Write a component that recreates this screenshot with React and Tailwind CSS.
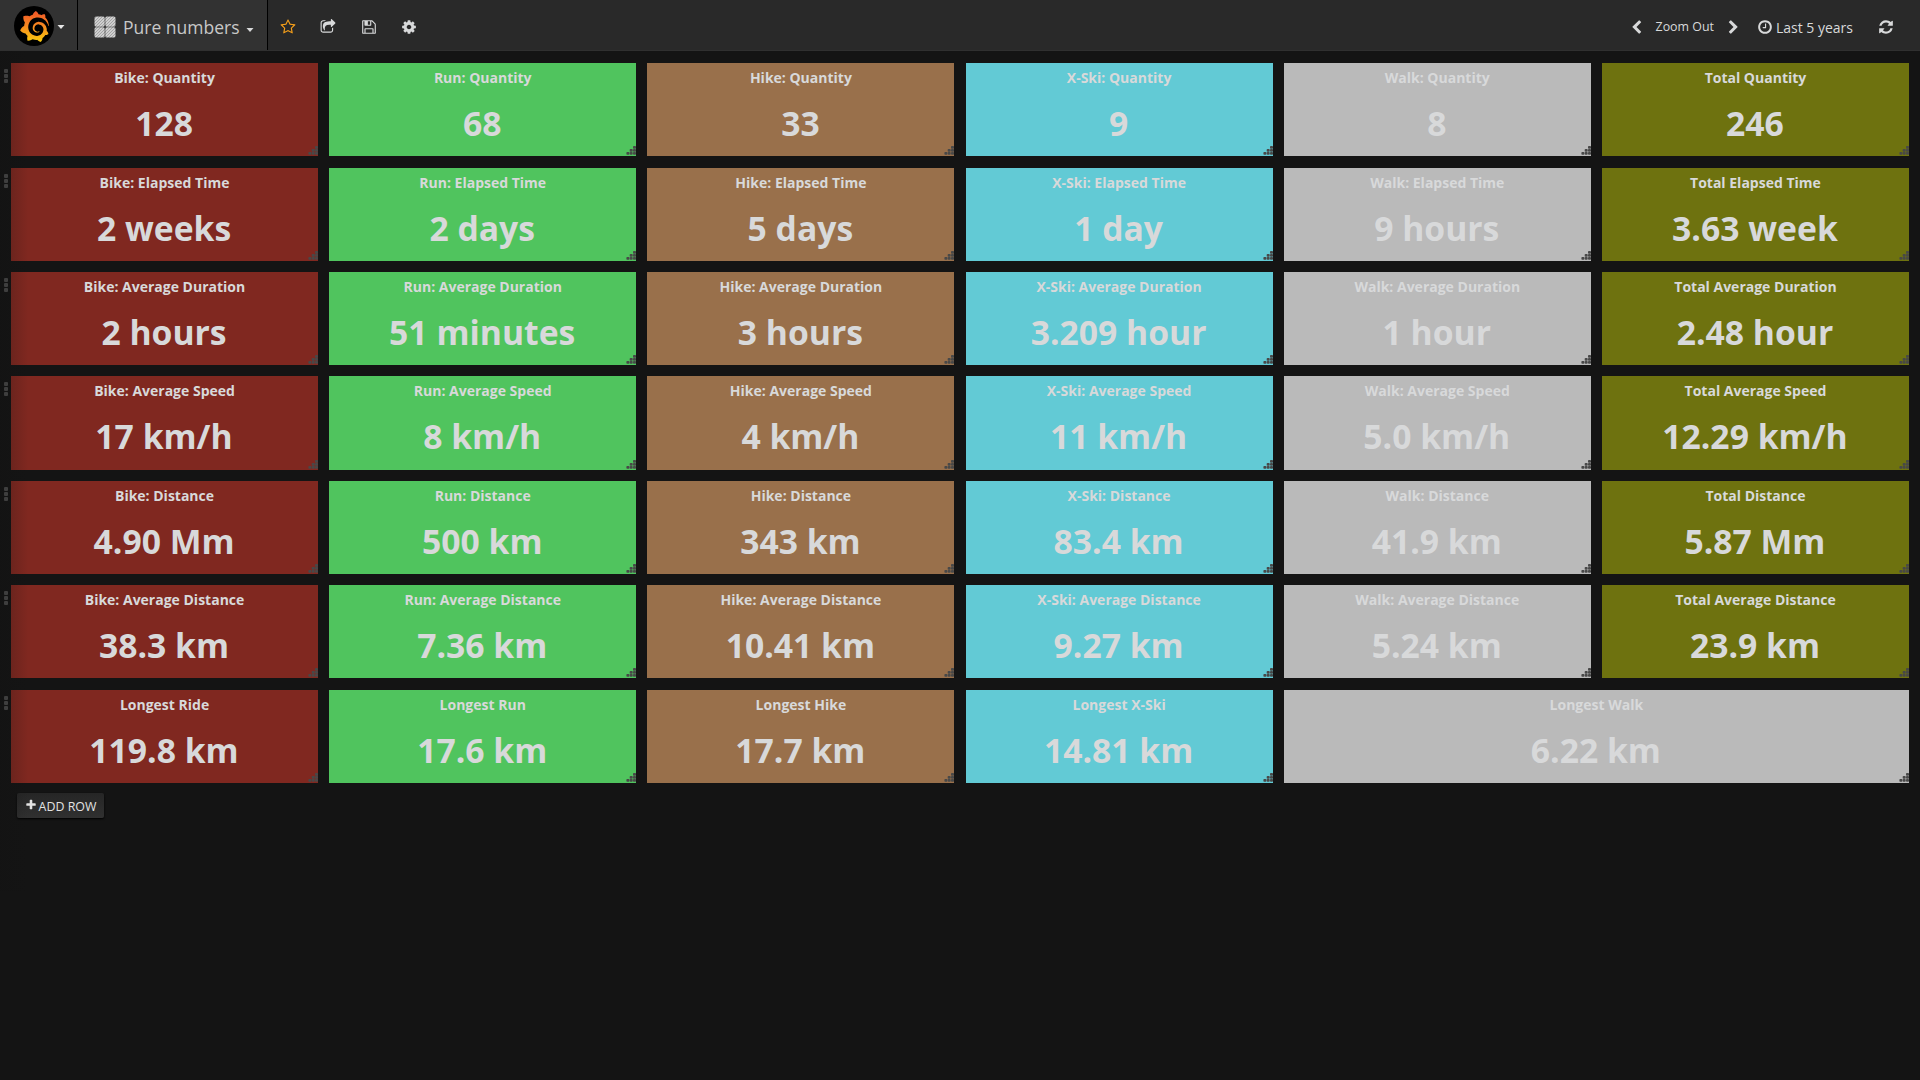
import React from "react";
import { SiGrafana } from "react-icons/si";

const PATHS = {
  star: "M1201 1004l306-297-422-62-189-382-189 382-422 62 306 297-73 421 378-199 377 199zm527-357q0 22-26 48l-363 354 86 500q1 7 1 20 0 50-41 50-19 0-40-12l-449-236-449 236q-22 12-40 12-21 0-31.5-14.5t-10.5-35.5q0-6 2-20l86-500-364-354q-25-27-25-48 0-37 56-46l502-73 225-455q19-41 49-41t49 41l225 455 502 73q56 9 56 46z",
  cog: "M1152 896q0-106-75-181t-181-75-181 75-75 181 75 181 181 75 181-75 75-181zm512-109v222q0 12-8 23t-20 13l-185 28q-19 54-39 91 35 50 107 138 10 12 10 25t-9 23q-27 37-99 108t-94 71q-12 0-26-9l-138-108q-44 23-91 38-16 136-29 186-7 28-36 28h-222q-14 0-24.5-8.5t-11.5-21.5l-28-184q-49-16-90-37l-141 107q-10 9-25 9-14 0-25-11-126-114-165-168-7-10-7-23 0-12 8-23 15-21 51-66.5t54-70.5q-27-50-41-99l-183-27q-13-2-21-12.5t-8-23.5v-222q0-12 8-23t19-13l186-28q14-46 39-92-40-57-107-138-10-12-10-24 0-10 9-23 26-36 98.5-107.5t94.5-71.5q13 0 26 10l138 107q44-23 91-38 16-136 29-186 7-28 36-28h222q14 0 24.5 8.5t11.5 21.5l28 184q49 16 90 37l142-107q9-9 24-9 13 0 25 10 129 119 165 170 7 8 7 22 0 12-8 23-15 21-51 66.5t-54 70.5q26 50 41 98l183 28q13 2 21 12.5t8 23.5z",
  save: "M512 1536h768v-384h-768v384zm896 0h128v-896q0-14-10-38.5t-20-34.5l-281-281q-10-10-34-20t-39-10v416q0 40-28 68t-68 28h-576q-40 0-68-28t-28-68v-416h-128v1280h128v-416q0-40 28-68t68-28h832q40 0 68 28t28 68v416zm-384-928v-320q0-13-9.5-22.5t-22.5-9.5h-192q-13 0-22.5 9.5t-9.5 22.5v320q0 13 9.5 22.5t22.5 9.5h192q13 0 22.5-9.5t9.5-22.5zm640 32v928q0 40-28 68t-68 28h-1344q-40 0-68-28t-28-68v-1344q0-40 28-68t68-28h928q40 0 88 20t76 48l280 280q28 28 48 76t20 88z",
  clock: "M1024 544v448q0 14-9 23t-23 9h-320q-14 0-23-9t-9-23v-64q0-14 9-23t23-9h224v-352q0-14 9-23t23-9h64q14 0 23 9t9 23zm416 352q0-148-73-273t-198-198-273-73-273 73-198 198-73 273 73 273 198 198 273 73 273-73 198-198 73-273zm224 0q0 209-103 385.5t-279.5 279.5-385.5 103-385.5-103-279.5-279.5-103-385.5 103-385.5 279.5-279.5 385.5-103 385.5 103 279.5 279.5 103 385.5z",
  refresh: "M1639 1056q0 5-1 7-64 268-268 434.5t-478 166.5q-146 0-282.5-55t-243.5-157l-129 129q-19 19-45 19t-45-19-19-45v-448q0-26 19-45t45-19h448q26 0 45 19t19 45-19 45l-137 137q71 66 161 102t187 36q134 0 250-65t186-179q11-17 53-117 8-23 30-23h192q13 0 22.5 9.5t9.5 22.5zm25-800v448q0 26-19 45t-45 19h-448q-26 0-45-19t-19-45 19-45l138-138q-148-137-349-137-134 0-250 65t-186 179q-11 17-53 117-8 23-30 23h-199q-13 0-22.5-9.5t-9.5-22.5v-7q65-268 270-434.5t480-166.5q146 0 284 55.5t245 156.5l130-129q19-19 45-19t45 19 19 45z",
  left: "M1427 301l-531 531 531 531q19 19 19 45t-19 45l-166 166q-19 19-45 19t-45-19l-742-742q-19-19-19-45t19-45l742-742q19-19 45-19t45 19l166 166q19 19 19 45t-19 45z",
  right: "M1363 877l-742 742q-19 19-45 19t-45-19l-166-166q-19-19-19-45t19-45l531-531-531-531q-19-19-19-45t19-45l166-166q19-19 45-19t45 19l742 742q19 19 19 45t-19 45z",
  plus: "M1600 736v192q0 40-28 68t-68 28h-416v416q0 40-28 68t-68 28h-192q-40 0-68-28t-28-68v-416h-416q-40 0-68-28t-28-68v-192q0-40 28-68t68-28h416v-416q0-40 28-68t68-28h192q40 0 68 28t28 68v416h416q40 0 68 28t28 68z",
  share: "M1472 989v259q0 119-84.5 203.5t-203.5 84.5h-832q-119 0-203.5-84.5t-84.5-203.5v-832q0-119 84.5-203.5t203.5-84.5h255q13 0 22.5 9.5t9.5 22.5q0 27-26 32-77 26-133 60-10 4-16 4h-112q-66 0-113 47t-47 113v832q0 66 47 113t113 47h832q66 0 113-47t47-113v-214q0-19 18-29 28-13 54-37 16-16 35-8 21 9 21 29zm237-496l-384 384q-18 19-45 19-12 0-25-5-39-17-39-59v-192h-160q-323 0-438 131-119 137-74 473 3 23-20 34-8 2-12 2-16 0-26-13-10-14-21-31t-39.5-68.5-49.5-99.5-38.5-114-17.5-122q0-49 3.5-91t14-90 28-88 47-81.5 68.5-74 94.5-61.5 124.5-48.5 159.5-30.5 196.5-11h160v-192q0-42 39-59 13-5 25-5 26 0 45 19l384 384q19 19 19 45t-19 45z",
};

function Icon({ name, className }) {
  return (
    <svg viewBox="0 0 1792 1792" fill="currentColor" className={`shrink-0 ${className}`}>
      <path d={PATHS[name]} />
    </svg>
  );
}

function Caret({ className }) {
  return (
    <svg viewBox="0 0 8 4" fill="currentColor" className={`h-1 w-2 shrink-0 ${className}`}>
      <path d="M0.5 0H7.5L4 4Z" />
    </svg>
  );
}

function GrafanaLogo() {
  return (
    <div className="flex size-10 items-center justify-center rounded-full bg-black">
      <svg width="0" height="0" className="absolute">
        <linearGradient id="flame" x1="0" y1="0" x2="0" y2="1">
          <stop offset="0.05" stopColor="#f05a28" />
          <stop offset="0.5" stopColor="#f78b1f" />
          <stop offset="1" stopColor="#fccc0d" />
        </linearGradient>
      </svg>
      <SiGrafana size={31} className="shrink-0" style={{ fill: "url(#flame)" }} />
    </div>
  );
}

function DashboardIcon() {
  return (
    <svg viewBox="0 0 22 22" className="size-[22px] shrink-0">
      <defs>
        <pattern id="hatch" width="3" height="3" patternUnits="userSpaceOnUse">
          <rect width="3" height="3" fill="#cfcfcf" />
          <path d="M0 3L3 0" stroke="#989898" strokeWidth="0.8" />
        </pattern>
      </defs>
      {[[0.5, 0.5], [11.3, 0.5], [0.5, 11.3], [11.3, 11.3]].map(([x, y]) => (
        <rect key={`${x}-${y}`} x={x} y={y} width="10.2" height="10.2" rx="1.6" fill="url(#hatch)" />
      ))}
    </svg>
  );
}

const COLORS = [
  "bg-[#802820]",
  "bg-[#50c45e]",
  "bg-[#99704b]",
  "bg-[#62cad5]",
  "bg-[#bababa]",
  "bg-[#6e720f]",
];

const ROWS = [
  [["Bike: Quantity", "128"], ["Run: Quantity", "68"], ["Hike: Quantity", "33"], ["X-Ski: Quantity", "9"], ["Walk: Quantity", "8"], ["Total Quantity", "246"]],
  [["Bike: Elapsed Time", "2 weeks"], ["Run: Elapsed Time", "2 days"], ["Hike: Elapsed Time", "5 days"], ["X-Ski: Elapsed Time", "1 day"], ["Walk: Elapsed Time", "9 hours"], ["Total Elapsed Time", "3.63 week"]],
  [["Bike: Average Duration", "2 hours"], ["Run: Average Duration", "51 minutes"], ["Hike: Average Duration", "3 hours"], ["X-Ski: Average Duration", "3.209 hour"], ["Walk: Average Duration", "1 hour"], ["Total Average Duration", "2.48 hour"]],
  [["Bike: Average Speed", "17 km/h"], ["Run: Average Speed", "8 km/h"], ["Hike: Average Speed", "4 km/h"], ["X-Ski: Average Speed", "11 km/h"], ["Walk: Average Speed", "5.0 km/h"], ["Total Average Speed", "12.29 km/h"]],
  [["Bike: Distance", "4.90 Mm"], ["Run: Distance", "500 km"], ["Hike: Distance", "343 km"], ["X-Ski: Distance", "83.4 km"], ["Walk: Distance", "41.9 km"], ["Total Distance", "5.87 Mm"]],
  [["Bike: Average Distance", "38.3 km"], ["Run: Average Distance", "7.36 km"], ["Hike: Average Distance", "10.41 km"], ["X-Ski: Average Distance", "9.27 km"], ["Walk: Average Distance", "5.24 km"], ["Total Average Distance", "23.9 km"]],
  [["Longest Ride", "119.8 km"], ["Longest Run", "17.6 km"], ["Longest Hike", "17.7 km"], ["Longest X-Ski", "14.81 km"], ["Longest Walk", "6.22 km"]],
];

const HANDLE_DOTS = [[7, 0], [3.7, 3], [7, 3], [0.4, 6], [3.7, 6], [7, 6]];

function Panel({ title, value, color, wide }) {
  return (
    <div className={`relative flex h-[93.2px] flex-col items-center ${color} ${wide ? "col-span-2" : ""}`}>
      <div className="mt-1 text-sm leading-[21px] font-bold whitespace-nowrap">{title}</div>
      <div className="mt-3 mr-px text-[33.7px] leading-[46px] font-bold whitespace-nowrap">{value}</div>
      <svg viewBox="0 0 10 9" className="absolute right-0 bottom-px h-[9px] w-2.5 fill-[#484848]">
        {HANDLE_DOTS.map(([x, y]) => (
          <rect key={`${x}-${y}`} x={x} y={y} width="3" height="2.8" rx="0.8" />
        ))}
      </svg>
    </div>
  );
}

function RowHandle() {
  return (
    <div className="absolute top-1.5 left-1 flex flex-col gap-px">
      <span className="h-1 w-1 rounded-[1px] bg-[#4c4c4c]" />
      <span className="h-1 w-1 rounded-[1px] bg-[#4c4c4c]" />
      <span className="h-1 w-1 rounded-[1px] bg-[#4c4c4c]" />
    </div>
  );
}

export default function App() {
  return (
    <div className="relative h-[1080px] w-[1920px] overflow-hidden bg-[#141414] font-['Open_Sans',sans-serif] text-[#d8d9da]">
      <header className="flex h-[51px] border-b border-[#303030] bg-[#292929]">
        <div className="flex w-[78px] items-center border-r border-black bg-[#323232] pt-0.5 pl-3.5">
          <GrafanaLogo />
          <Caret className="mt-0.5 ml-[3px] text-[#e6e6e6]" />
        </div>
        <div className="flex w-[190px] items-center border-r border-black bg-[#323232] pt-1 pl-4">
          <DashboardIcon />
          <span className="ml-[7px] text-[17.5px] whitespace-nowrap text-[#c8c8c8]">Pure numbers</span>
          <Caret className="mt-[5px] ml-[7px] text-[#d8d9da]" />
        </div>
        <div className="flex items-center gap-[24.3px] pt-1 pl-3">
          <Icon name="star" className="size-4 text-[#f7a01a]" />
          <Icon name="share" className="size-4" />
          <Icon name="save" className="size-4" />
          <Icon name="cog" className="size-4" />
        </div>
        <div className="ml-auto flex items-center pt-1 pr-[26px]">
          <Icon name="left" className="size-[15px]" />
          <span className="ml-3 text-[12.4px] whitespace-nowrap">Zoom Out</span>
          <Icon name="right" className="ml-3 size-[15px]" />
          <Icon name="clock" className="ml-4 size-4" />
          <span className="mt-0.5 ml-[3px] text-sm whitespace-nowrap">Last 5 years</span>
          <Icon name="refresh" className="ml-[25px] size-4" />
        </div>
      </header>

      <main className="flex flex-col gap-[11.23px] pt-[12.2px]">
        {ROWS.map((row) => (
          <section key={row[0][0]} className="relative grid grid-cols-6 gap-[11.15px] px-[11px]">
            <RowHandle />
            {row.map(([title, value], i) => (
              <Panel key={title} title={title} value={value} color={COLORS[i]} wide={row.length === 5 && i === 4} />
            ))}
          </section>
        ))}
      </main>

      <button className="mt-2.5 ml-[17px] flex h-[25px] w-[87px] items-center justify-center rounded-[2px] bg-linear-to-b from-[#262626] to-[#303030] pt-[3px] text-[12.4px] text-[#e3e3e3] shadow-[0_1px_2px_#000]">
        <Icon name="plus" className="mr-0.5 mb-[3px] size-3" />
        ADD ROW
      </button>

      <div className="pointer-events-none absolute top-[51px] left-0 h-[840px] w-7 bg-linear-to-r from-[#121212]/30 to-transparent" />
    </div>
  );
}
